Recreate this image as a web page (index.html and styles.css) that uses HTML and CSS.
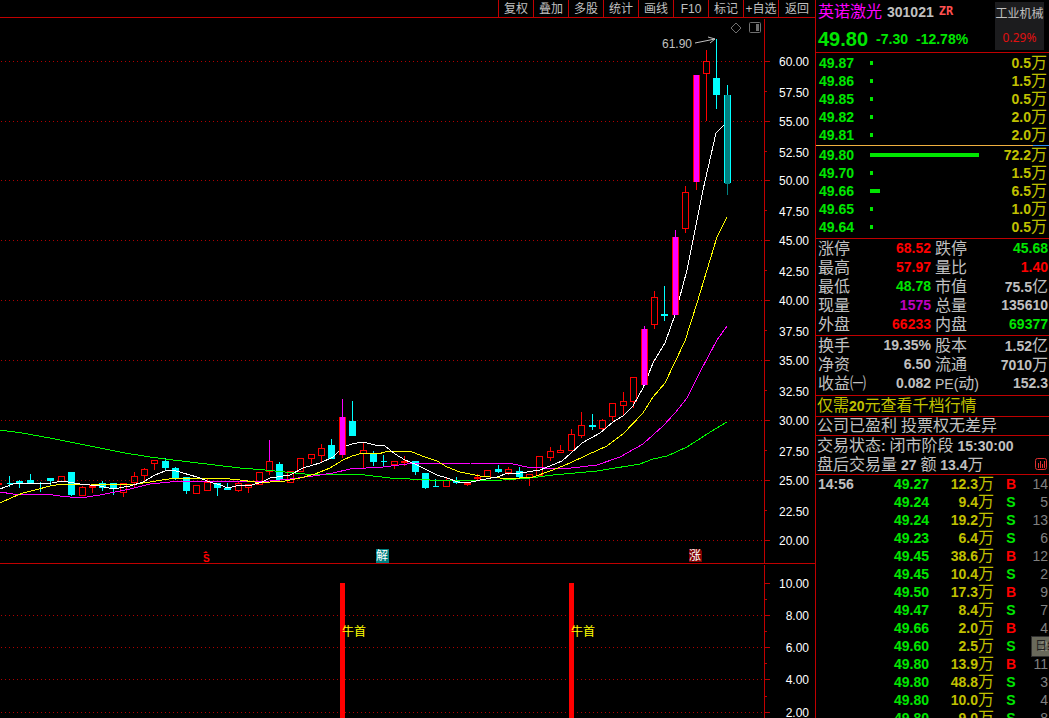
FILE: index.html
```html
<!DOCTYPE html>
<html lang="zh-CN">
<head>
<meta charset="utf-8">
<meta name="viewport" content="width=device-width, initial-scale=1">
<title>英诺激光 301021</title>
<link rel="stylesheet" href="styles.css">
</head>
<body>
<div class="app">
  <main class="main">
    <nav class="toolbar" aria-label="图表工具">
      <button type="button">复权</button>
      <button type="button">叠加</button>
      <button type="button">多股</button>
      <button type="button">统计</button>
      <button type="button">画线</button>
      <button type="button">F10</button>
      <button type="button">标记</button>
      <button type="button">+自选</button>
      <button type="button" class="back">返回</button>
    </nav>

    <section class="pane" aria-label="K线图">
      <svg class="plot" viewBox="0 18 815 545" role="img" aria-label="日K线">
        <g class="grid" transform="translate(0 .5)">
          <path d="M1 61H764M1 121H764M1 180H764M1 240H764M1 300H764M1 360H764M1 420H764M1 480H764M1 540H764"/>
        </g>
        <g class="axis" transform="translate(.5 .5)">
          <path d="M764 18V563"/>
          <path d="M764 61h5M764 121h5M764 180h5M764 240h5M764 300h5M764 360h5M764 420h5M764 480h5M764 540h5"/>
          <path d="M764 91h2M764 151h2M764 210h2M764 270h2M764 330h2M764 390h2M764 450h2M764 510h2"/>
        </g>
        <g class="scale">
          <text x="809" y="66">60.00</text><text x="809" y="97">57.50</text>
          <text x="809" y="126">55.00</text><text x="809" y="157">52.50</text>
          <text x="809" y="185">50.00</text><text x="809" y="216">47.50</text>
          <text x="809" y="245">45.00</text><text x="809" y="276">42.50</text>
          <text x="809" y="305">40.00</text><text x="809" y="336">37.50</text>
          <text x="809" y="365">35.00</text><text x="809" y="396">32.50</text>
          <text x="809" y="425">30.00</text><text x="809" y="456">27.50</text>
          <text x="809" y="485">25.00</text><text x="809" y="516">22.50</text>
          <text x="809" y="545">20.00</text>
        </g>

        <g class="candles" transform="translate(.5 .5)">
          <path class="up" d="M61 475V476M58 476h6v5h-6z
            M82 485V487M79 487h6v8h-6z
            M123 482V483M120 483h6v9h-6zM123 492V496
            M134 471V476M131 476h6v6h-6zM134 482V486
            M144 467V469M141 469h6v6h-6zM144 475V480
            M151 460h6v3h-6zM154 463V469
            M193 485h6v8h-6z
            M207 477V482M204 482h6v8h-6z
            M238 480V483M235 483h6v7h-6zM238 490V491
            M245 484h6v3h-6zM248 487V492
            M259 471V472M256 472h6v12h-6z
            M266 461h6v10h-6zM269 471V474
            M290 470V471M287 471h6v11h-6z
            M300 457V458M297 458h6v13h-6z
            M308 454h6v4h-6zM311 458V463
            M321 443V448M318 448h6v7h-6zM321 455V462
            M363 441V450M360 450h6v3h-6zM363 453V467
            M391 461h6v3h-6zM394 464V468
            M446 477V480M443 480h6v6h-6z
            M464 483h6v1h-6zM467 484V485
            M487 469V470M484 470h6v6h-6z
            M508 466V469M505 469h6v3h-6zM508 472V474
            M526 474h6v3h-6zM529 477V485
            M539 455V456M536 456h6v19h-6z
            M550 446V451M547 451h6v6h-6zM550 457V460
            M560 444V450M557 450h6v2h-6z
            M571 428V434M568 434h6v16h-6z
            M581 411V425M578 425h6v10h-6zM581 435V437
            M602 418V420M599 420h6v8h-6zM602 428V430
            M609 403h6v13h-6zM612 416V420
            M623 391V401M620 401h6v4h-6zM623 405V414
            M630 377h6v24h-6zM633 401V407
            M654 290V297M651 297h6v27h-6zM654 324V328
            M685 185V192M682 192h6v36h-6zM685 228V232
            M706 49V61M703 61h6v12h-6zM706 73V120"/>
          <path class="up solid" d="M0 483h1v1h-1zM89 485h6v2h-6zM92 487V492M404 455V465M401 461h6v1h-6zM477 473V479M474 477h6v1h-6z"/>
          <path class="down" d="M9 475V486M6 483h6v0z
            M19 479V487M16 481h6v1h-6z
            M30 473V480M27 480h6v2h-6z
            M40 481V491M38 483h5
            M50 477V485M47 478h6v2h-6z
            M71 472V495M68 472h6v22h-6z
            M102 480V490M99 483h6v4h-6z
            M113 483V494M110 483h6v5h-6z
            M165 457V470M162 461h6v6h-6z
            M175 466V479M172 468h6v9h-6z
            M186 477V493M183 477h6v13h-6z
            M217 483V495M214 483h6v4h-6z
            M227 482V489M224 488h6v1h-6z
            M279 461V479M276 464h6v15h-6z
            M331 438V458M328 445h6v13h-6z
            M352 400V435M349 421h6v14h-6z
            M373 450V465M370 453h6v8h-6z
            M383 454V465M380 461h6
            M415 461V474M412 461h6v10h-6z
            M425 472V488M422 473h6v14h-6z
            M435 478V486M432 486h6
            M456 476V483M453 481h6v1h-6z
            M498 464V472M495 469h6v2h-6z
            M519 466V477M516 471h6v5h-6z
            M592 413V429M589 425h6v1h-6z
            M664 285V320M661 314h6v1h-6z
            M716 38V108M713 78h6v16h-6z"/>
          <path class="spike" d="M269 439V460"/>
        </g>

        <g class="averages">
          <path class="ma-long" d="M0 430L22 433L50 438L75 443L100 448L125 453L150 457L165 459L190 462L215 465L240 468L265 470L305 474L325 474L365 475L390 478L430 480L463 481L503 480L530 478L553 475L597 471L640 464L653 459L667 456L687 447L715 429L727 422"/>
          <path class="ma-mid" d="M0 492L13 494L45 494L60 496L80 498L100 495L130 489L150 484L170 482L200 481L230 482L270 481L290 479L313 476L333 473L350 469L383 467L407 464L430 463L470 463L513 464L527 467L563 469L597 465L620 457L643 444L663 426L675 413L687 398L700 372L717 340L727 326"/>
          <path class="ma-ten" d="M0 503L13 497L23 493L35 490L50 486L62 484L90 484L130 485L150 482L175 478L220 478L240 480L255 482L270 482L285 481L300 478L315 474L330 468L343 460L352 456L363 453L378 454L385 452L400 451L412 452L425 457L437 461L447 467L460 472L480 476L500 478L520 478L533 477L553 470L570 463L587 455L607 446L623 434L643 413L653 397L665 383L685 341L697 303L717 237L727 217"/>
          <path class="ma-five" d="M0 489L13 484L52 483L62 481L80 484L100 486L113 489L130 486L143 482L155 475L165 471L173 470L183 473L197 477L210 482L220 485L228 488L240 485L252 485L262 482L270 478L290 475L303 468L320 463L333 457L343 447L352 444L363 442L375 445L385 446L395 454L405 460L417 465L425 469L437 475L447 478L458 482L467 483L480 480L497 477L508 473L520 473L540 470L562 461L570 454L582 443L600 433L613 422L623 416L633 406L643 388L653 363L665 343L675 315L687 270L693 240L703 190L716 133L725 124"/>
        </g>

        <g class="limit-up">
          <path class="edge" d="M339 417h7v38h-7zM342 455h1v3h-1zM641 329h7v56h-7zM672 237h7v78h-7zM693 75h7v107h-7zM696 182h1v8h-1z"/>
          <path class="core" d="M342 399h1v18h-1zM340 417h5v38h-5zM644 326h1v3h-1zM642 329h5v56h-5zM675 230h1v7h-1zM673 237h5v78h-5zM694 75h5v107h-5z"/>
        </g>
        <g class="today">
          <path class="today-edge" d="M724 95h7v88h-7zM727 85h1v10h-1z"/>
          <path class="today-core" d="M725 95h5v89h-5zM727 184h1v11h-1z"/>
        </g>

        <text class="peak" x="662" y="48">61.90</text>
        <path class="peak-arrow" d="M695 43L715 39M708 37L715 39L710 43"/>

        <path class="dividend" d="M203 553L206 551L208 553z"/>
        <text class="dividend" x="203" y="562">S</text>
        <path class="tag-unlock" d="M376 549h13v14h-13z"/>
        <text class="tag" x="376" y="560">解</text>
        <path class="tag-rise" d="M689 549h11l2 2v11h-13z"/>
        <text class="tag" x="689" y="560">涨</text>
      </svg>
      <div class="pane-tools">
        <button type="button" aria-label="标记点">
          <svg width="12" height="12" viewBox="0 0 12 12"><path d="M6 1L11 6L6 11L1 6z"/></svg>
        </button>
        <button type="button" aria-label="侧栏">
          <svg width="12" height="12" viewBox="0 0 12 12"><rect x=".5" y=".5" width="11" height="10" rx="1"/><path class="fill" d="M7 2h3v7h-3z"/></svg>
        </button>
      </div>
    </section>

    <section class="pane signal" aria-label="指标">
      <svg class="plot" viewBox="0 564 815 154" role="img" aria-label="牛首指标">
        <g class="grid" transform="translate(0 .5)">
          <path d="M1 615H764M1 647H764M1 679H764M1 712H764"/>
        </g>
        <g class="axis" transform="translate(.5 .5)">
          <path d="M764 564V718"/>
          <path d="M764 583h5M764 615h5M764 647h5M764 679h5M764 712h5"/>
          <path d="M764 599h2M764 631h2M764 663h2M764 696h2"/>
        </g>
        <g class="scale">
          <text x="809" y="588">10.00</text><text x="809" y="620">8.00</text>
          <text x="809" y="652">6.00</text><text x="809" y="684">4.00</text>
          <text x="809" y="717">2.00</text>
        </g>
        <path class="signal-bar" d="M340 583h5v135h-5zM569 583h5v135h-5z"/>
        <text class="signal-name" x="342" y="636">牛首</text>
        <text class="signal-name" x="571" y="636">牛首</text>
      </svg>
    </section>
  </main>

  <aside class="side">
    <header class="quote">
      <div class="quote-info">
        <h1 class="quote-title"><span class="cn">英诺激光</span><span class="code">301021</span><span class="flag">ZR</span></h1>
        <p class="quote-price"><strong>49.80</strong><span>-7.30</span><span>-12.78%</span></p>
      </div>
      <a class="industry" href="#industry"><span>工业机械</span><span class="pct">0.29%</span></a>
    </header>

    <table class="book sell" aria-label="卖盘">
      <tr><td>49.87</td><td><i style="width:3px"></i></td><td>0.5<span class="cn">万</span></td></tr>
      <tr><td>49.86</td><td><i style="width:3px"></i></td><td>1.5<span class="cn">万</span></td></tr>
      <tr><td>49.85</td><td><i style="width:3px"></i></td><td>0.5<span class="cn">万</span></td></tr>
      <tr><td>49.82</td><td><i style="width:3px"></i></td><td>2.0<span class="cn">万</span></td></tr>
      <tr><td>49.81</td><td><i style="width:3px"></i></td><td>2.0<span class="cn">万</span></td></tr>
    </table>
    <div class="balance"><i style="width:93%"></i></div>
    <table class="book buying" aria-label="买盘">
      <tr><td>49.80</td><td><i style="width:109px"></i></td><td>72.2<span class="cn">万</span></td></tr>
      <tr><td>49.70</td><td><i style="width:3px"></i></td><td>1.5<span class="cn">万</span></td></tr>
      <tr><td>49.66</td><td><i style="width:10px"></i></td><td>6.5<span class="cn">万</span></td></tr>
      <tr><td>49.65</td><td><i style="width:3px"></i></td><td>1.0<span class="cn">万</span></td></tr>
      <tr><td>49.64</td><td><i style="width:3px"></i></td><td>0.5<span class="cn">万</span></td></tr>
    </table>

    <dl class="stats">
      <div><dt>涨停</dt><dd class="red">68.52</dd></div><div><dt>跌停</dt><dd class="green">45.68</dd></div>
      <div><dt>最高</dt><dd class="red">57.97</dd></div><div><dt>量比</dt><dd class="red">1.40</dd></div>
      <div><dt>最低</dt><dd class="green">48.78</dd></div><div><dt>市值</dt><dd>75.5<span class="cn">亿</span></dd></div>
      <div><dt>现量</dt><dd class="purple">1575</dd></div><div><dt>总量</dt><dd>135610</dd></div>
      <div><dt>外盘</dt><dd class="red">66233</dd></div><div><dt>内盘</dt><dd class="green">69377</dd></div>
    </dl>
    <dl class="stats">
      <div><dt>换手</dt><dd>19.35%</dd></div><div><dt>股本</dt><dd>1.52<span class="cn">亿</span></dd></div>
      <div><dt>净资</dt><dd>6.50</dd></div><div><dt>流通</dt><dd>7010<span class="cn">万</span></dd></div>
      <div><dt>收益㈠</dt><dd>0.082</dd></div><div><dt><span class="latin">PE(</span>动<span class="latin">)</span></dt><dd>152.3</dd></div>
    </dl>

    <p class="notice promo"><a href="#level2"><span class="cn">仅需</span>20<span class="cn">元查看千档行情</span></a></p>
    <p class="notice"><span class="cn">公司已盈利</span> <span class="cn">投票权无差异</span></p>
    <div class="notice session">
      <p><span class="cn">交易状态</span>: <span class="cn">闭市阶段</span> 15:30:00</p>
      <p><span class="cn">盘后交易量</span> 27 <span class="cn">额</span> 13.4<span class="cn">万</span>
        <button type="button" class="chart-btn" aria-label="盘后图表">
          <svg width="12" height="12" viewBox="0 0 12 12"><rect x=".5" y=".5" width="11" height="11" rx="2"/><path class="fill" d="M3 5h1v5h-1zM5 3h1v7h-1zM7 6h1v4h-1zM9 3h1v7h-1z"/></svg>
        </button></p>
    </div>

    <div class="ticks-wrap">
      <table class="ticks" aria-label="成交明细">
        <colgroup><col><col class="c-price"><col class="c-vol"><col class="c-side"><col class="c-count"></colgroup>
        <tr><td>14:56</td><td>49.27</td><td>12.3<span class="cn">万</span></td><td class="buy">B</td><td>14</td></tr>
        <tr><td></td><td>49.24</td><td>9.4<span class="cn">万</span></td><td>S</td><td>5</td></tr>
        <tr><td></td><td>49.24</td><td>19.2<span class="cn">万</span></td><td>S</td><td>13</td></tr>
        <tr><td></td><td>49.23</td><td>6.4<span class="cn">万</span></td><td>S</td><td>6</td></tr>
        <tr><td></td><td>49.45</td><td>38.6<span class="cn">万</span></td><td class="buy">B</td><td>12</td></tr>
        <tr><td></td><td>49.45</td><td>10.4<span class="cn">万</span></td><td>S</td><td>2</td></tr>
        <tr><td></td><td>49.50</td><td>17.3<span class="cn">万</span></td><td class="buy">B</td><td>9</td></tr>
        <tr><td></td><td>49.47</td><td>8.4<span class="cn">万</span></td><td>S</td><td>7</td></tr>
        <tr><td></td><td>49.66</td><td>2.0<span class="cn">万</span></td><td class="buy">B</td><td>4</td></tr>
        <tr><td></td><td>49.60</td><td>2.5<span class="cn">万</span></td><td>S</td><td>2</td></tr>
        <tr><td></td><td>49.80</td><td>13.9<span class="cn">万</span></td><td class="buy">B</td><td>11</td></tr>
        <tr><td></td><td>49.80</td><td>48.8<span class="cn">万</span></td><td>S</td><td>3</td></tr>
        <tr><td></td><td>49.80</td><td>10.0<span class="cn">万</span></td><td>S</td><td>4</td></tr>
        <tr><td></td><td>49.80</td><td>9.0<span class="cn">万</span></td><td>S</td><td>8</td></tr>
      </table>
      <div class="period-tip">日线</div>
    </div>
  </aside>
</div>
</body>
</html>
```

FILE: styles.css
```css
:root {
  --line: #c00000;
  --text: #c0c0c0;
  --green: #00e600;
  --red: #ff0000;
  --yellow: #c0c000;
  --cyan: #00ffff;
  --magenta: #ff00ff;
}

* { box-sizing: border-box; }

body {
  margin: 0;
  background: #000;
  color: var(--text);
  font-family: "Liberation Sans", "Noto Sans CJK SC", sans-serif;
  font-size: 12px;
}

button {
  padding: 0;
  border: 0;
  background: none;
  color: inherit;
  font: inherit;
  cursor: pointer;
}

a { color: inherit; text-decoration: none; }
p, dl, dd, h1 { margin: 0; }

.app {
  display: flex;
  height: 100vh;
  overflow: hidden;
}

.main { flex: 1; min-width: 0; }

/* toolbar */
.toolbar {
  display: flex;
  justify-content: flex-end;
  border-bottom: 1px solid var(--line);
}
.toolbar button {
  width: 35px;
  height: 17px;
  border-left: 1px solid var(--line);
  line-height: 16px;
  white-space: nowrap;
}
.toolbar .back { width: 37px; }

/* chart panes */
.pane { position: relative; }
.signal { border-top: 1px solid var(--line); }
.plot { display: block; width: 100%; height: auto; }

.grid path {
  stroke: #b00000;
  stroke-dasharray: 1 3;
  shape-rendering: crispEdges;
}
.axis path { fill: none; stroke: var(--line); shape-rendering: crispEdges; }
.scale text { fill: #fff; text-anchor: end; }

.candles path { shape-rendering: crispEdges; }
.up { fill: none; stroke: var(--red); }
.up.solid { fill: var(--red); }
.down { fill: var(--cyan); stroke: var(--cyan); }
.spike { stroke: var(--magenta); }

.averages path { fill: none; shape-rendering: crispEdges; }
.ma-five { stroke: #fff; }
.ma-ten { stroke: #ffff00; }
.ma-mid { stroke: var(--magenta); }
.ma-long { stroke: #00ff00; }

.edge { fill: var(--red); }
.core { fill: var(--magenta); }
.today-edge { fill: var(--cyan); }
.today-core { fill: #008080; }

.peak { fill: var(--text); }
.peak-arrow { fill: none; stroke: var(--text); }
.dividend { fill: var(--red); font-size: 10px; font-weight: bold; }
.tag { fill: #fff; }
.tag-unlock { fill: #008080; }
.tag-rise { fill: #800000; }
.signal-bar { fill: var(--red); }
.signal-name { fill: #ffff00; }

.pane-tools {
  position: absolute;
  top: 4px;
  right: 54px;
  display: flex;
  gap: 7px;
}
.pane-tools svg { display: block; fill: none; stroke: #707070; }
.pane-tools .fill { fill: #707070; stroke: none; }

/* quote column */
.side {
  display: flex;
  flex-direction: column;
  width: 234px;
  border-left: 1px solid var(--line);
  font-size: 14px;
  font-weight: bold;
}
.cn { font-size: 16px; font-weight: normal; }
.red { color: var(--red); }
.green { color: var(--green); }
.purple { color: #c000c0; }

.quote {
  display: flex;
  justify-content: space-between;
  padding: 0 5px 0 2px;
  height: 53px;
  border-bottom: 1px solid var(--line);
}
.quote-title {
  display: flex;
  gap: 5px;
  font-size: 14px;
  line-height: 24px;
}
.quote-title .cn { color: var(--magenta); }
.flag {
  color: #ff5050;
  font-family: "DejaVu Sans Mono", monospace;
  font-size: 12px;
  line-height: 22px;
}
.quote-price {
  display: flex;
  gap: 8px;
  color: var(--green);
  line-height: 30px;
}
.quote-price strong { font-size: 20px; }
.industry {
  display: flex;
  flex-direction: column;
  align-self: flex-start;
  width: 49px;
  margin-top: 2px;
  background: #1c1c1e;
  font-size: 12px;
  font-weight: normal;
  line-height: 24px;
  text-align: center;
}
.industry .pct { color: #e01010; font-family: "Noto Sans", sans-serif; }

table { width: 100%; border-collapse: collapse; table-layout: fixed; }
td { height: 18px; padding: 0; line-height: 18px; white-space: nowrap; }

.book { color: var(--green); }
.book.sell { margin: 1px 0; }
.book.buying { margin-bottom: 2px; }
.book td:first-child { width: 54px; padding-left: 3px; }
.book td:last-child { width: 56px; padding-right: 2px; color: var(--yellow); text-align: right; }
.book i { display: block; height: 4px; background: var(--green); }

.balance { height: 1px; background: #3090f0; }
.balance i { display: block; height: 1px; background: #f0b040; }

.stats {
  display: grid;
  grid-template-columns: 1fr 1fr;
  column-gap: 4px;
  padding: 0 1px 1px 2px;
  border-top: 1px solid var(--line);
}
.stats + .stats { padding-bottom: 2px; }
.stats div { display: flex; justify-content: space-between; height: 19px; line-height: 19px; }
.stats dt { font-size: 16px; font-weight: normal; white-space: nowrap; }
.stats .latin { font-size: 14px; }

.notice {
  padding-left: 1px;
  border-top: 1px solid var(--line);
  line-height: 18px;
  white-space: nowrap;
}
.promo { color: var(--yellow); line-height: 20px; }
.session { border-bottom: 1px solid var(--line); line-height: 19px; }
.session p { height: 19px; }
.chart-btn { float: right; margin: 3px 2px 0 0; }
.chart-btn svg { display: block; fill: none; stroke: #e03030; }
.chart-btn .fill { fill: #e03030; stroke: none; }

.ticks-wrap { position: relative; flex: 1; min-height: 0; overflow: hidden; }
.ticks td { color: var(--green); text-align: right; }
.ticks td:first-child { padding-left: 2px; color: var(--text); text-align: left; }
.ticks td:nth-child(3) { color: var(--yellow); }
.ticks td:nth-child(4) { text-align: center; }
.ticks td.buy { color: var(--red); }
.ticks td:last-child { padding-right: 1px; color: #808080; font-weight: normal; }
.c-price { width: 55px; }
.c-vol { width: 65px; }
.c-side { width: 34px; }
.c-count { width: 21px; }

.period-tip {
  position: absolute;
  top: 161px;
  right: 0;
  width: 18px;
  height: 21px;
  padding-left: 3px;
  overflow: hidden;
  border: 1px solid #303030;
  border-right: 0;
  background: rgba(150, 150, 130, .7);
  color: #202020;
  font-size: 12px;
  font-weight: normal;
  line-height: 18px;
  white-space: nowrap;
}
```
